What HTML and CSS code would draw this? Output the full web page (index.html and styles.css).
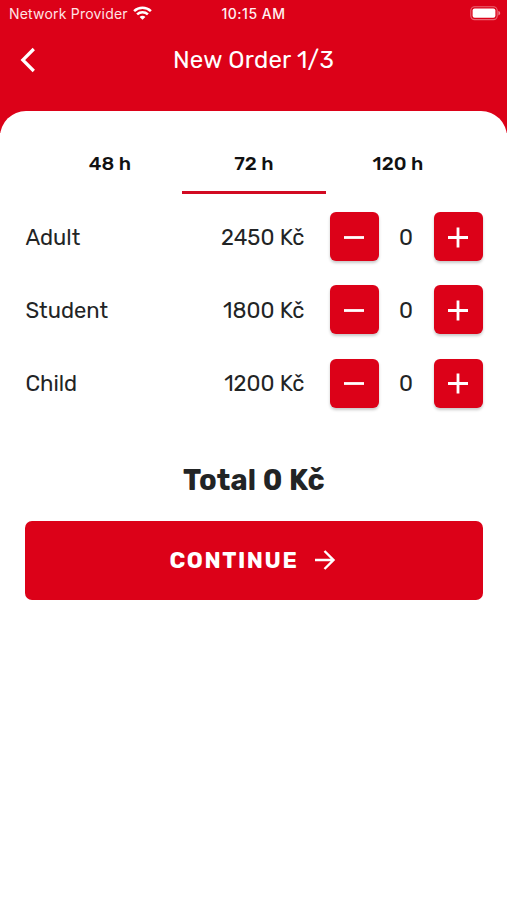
FILE: index.html
```html
<!DOCTYPE html>
<html lang="en">
<head>
<meta charset="utf-8">
<title>New Order</title>
<link rel="stylesheet" href="styles.css">
</head>
<body>
<header class="top">
  <div class="status">
    <div class="carrier"><span class="carrier-name">Network Provider</span>
      <svg class="wifi" viewBox="0 0 19 14" width="19" height="14" fill="none" stroke="#fff" stroke-width="2.6"><path d="M1.1 5.1C5.8.7 13.2.7 17.9 5.1M4.1 8.4c3-2.8 7.8-2.8 10.8 0"/><path d="M6.6 10.9 9.5 13.8l2.9-2.9c-1.6-1.5-4.2-1.5-5.8 0Z" fill="#fff" stroke="none"/></svg>
    </div>
    <span class="time">10:15 AM</span>
    <svg class="battery" viewBox="0 0 31 15" width="31" height="15"><rect x=".8" y=".8" width="26.4" height="12.8" rx="3.8" fill="none" stroke="#fff" stroke-opacity=".4" stroke-width="1.1"/><rect x="2.6" y="2.6" width="22.8" height="9.2" rx="2" fill="#fff"/><path d="M28.4 5v4.4c1.1-.4 1.8-1.2 1.8-2.2s-.7-1.8-1.8-2.2Z" fill="#fff" fill-opacity=".5"/></svg>
  </div>
  <div class="nav">
    <svg class="back" viewBox="0 0 18 26" width="18" height="26" fill="none" stroke="#fff" stroke-width="3.2"><path d="M14.8 2 3.8 13l11 11"/></svg>
    <h1 class="title">New Order 1/3</h1>
  </div>
</header>
<main class="sheet">
  <nav class="tabs"><a class="tab">48 h</a><a class="tab active">72 h</a><a class="tab">120 h</a></nav>
  <section class="items">
    <div class="item"><span class="label">Adult</span><span class="price">2450 Kč</span>
      <button class="step"><svg viewBox="0 0 24 24" width="24" height="24"><path d="M2 12.5h20"/></svg></button><span class="count">0</span>
      <button class="step"><svg viewBox="0 0 24 24" width="24" height="24"><path d="M2 12.5h20M12 2.5v20"/></svg></button></div>
    <div class="item"><span class="label">Student</span><span class="price">1800 Kč</span>
      <button class="step"><svg viewBox="0 0 24 24" width="24" height="24"><path d="M2 12.5h20"/></svg></button><span class="count">0</span>
      <button class="step"><svg viewBox="0 0 24 24" width="24" height="24"><path d="M2 12.5h20M12 2.5v20"/></svg></button></div>
    <div class="item"><span class="label">Child</span><span class="price">1200 Kč</span>
      <button class="step"><svg viewBox="0 0 24 24" width="24" height="24"><path d="M2 12.5h20"/></svg></button><span class="count">0</span>
      <button class="step"><svg viewBox="0 0 24 24" width="24" height="24"><path d="M2 12.5h20M12 2.5v20"/></svg></button></div>
  </section>
  <div class="total">Total 0 Kč</div>
  <button class="continue"><span class="continue-text">CONTINUE</span><svg viewBox="0 0 22 22" width="22" height="22" fill="none" stroke="#fff" stroke-width="2.4"><path d="M1 11h18.5M10.5 2l9 9-9 9"/></svg></button>
</main>
</body>
</html>
```
FILE: styles.css
```css
* { box-sizing: border-box; }
body { margin: 0; height: 900px; overflow: hidden; background: #fff; color: #222425; font-family: Rubik, Roboto, sans-serif; }
.top { height: 133px; background: #dc0118; color: #fff; }
.status { display: grid; grid-template-columns: 1fr auto 1fr; align-items: center; height: 27px; padding: 0 5px 0 9px; font-family: Inter, sans-serif; font-size: 14px; }
.carrier { display: flex; align-items: center; gap: 5px; color: #ffe3e5; }
.carrier-name { letter-spacing: .2px; white-space: nowrap; }
.wifi { flex: none; margin-bottom: 2px; }
.time { margin-right: 4px; font-weight: 500; font-size: 14px; letter-spacing: .5px; color: #fff0f1; }
.battery { justify-self: end; margin-right: 1px; }
.nav { display: grid; grid-template-columns: 60px 1fr 60px; align-items: center; height: 66px; }
.back { margin-left: 19px; }
.title { margin: 0; text-align: center; font-size: 24px; line-height: 30px; font-weight: 400; letter-spacing: .25px; }
.sheet { margin-top: -22px; height: 789px; background: #fff; border-radius: 26px 26px 0 0; padding: 28px 24.5px 0 25.4px; }
.tabs { display: grid; grid-template-columns: repeat(3, 144px); justify-content: center; }
.tab { height: 55px; padding-top: 13px; text-align: center; font-size: 19.5px; line-height: 24px; font-weight: 500; color: #111; border-bottom: 3px solid transparent; }
.active { border-bottom-color: #d20a22; }
.items { display: grid; gap: 24.4px; margin-top: 18px; }
.item { display: grid; grid-template-columns: 1fr auto 49px 55px 49px; align-items: center; height: 49px; font-size: 22px; }
.label, .price { padding-top: 1px; }
.price { margin-right: 25px; }
.count { padding-top: 1px; text-align: center; }
.step { display: grid; place-items: center; width: 49px; height: 49px; padding: 0; border: 0; border-radius: 6px; background: #dc0118; box-shadow: 0 2px 3px rgba(0, 0, 0, .22); }
.step svg { fill: none; stroke: #fff; stroke-width: 2.8; }
.total { margin-top: 54px; text-align: center; font-size: 29px; line-height: 36px; font-weight: 700; letter-spacing: .2px; }
.continue { display: flex; align-items: center; justify-content: center; gap: 15px; width: 100%; height: 79px; margin-top: 23px; padding: 0 3px 0 0; border: 0; border-radius: 7px; background: #dc0118; color: #fff; font: 700 22.5px Rubik, Roboto, sans-serif; }
.continue-text { letter-spacing: 1.6px; }
```
